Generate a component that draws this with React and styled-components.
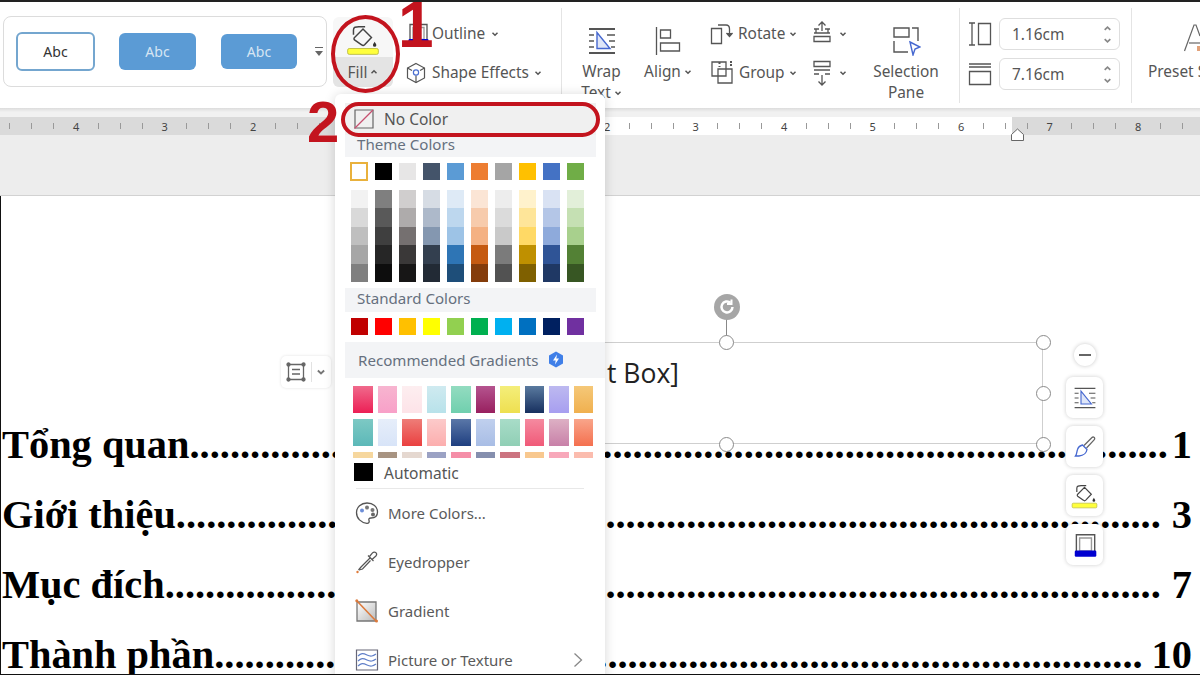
import React from 'react';
import styled, { createGlobalStyle } from 'styled-components';

const GlobalStyle = createGlobalStyle`
  html, body { margin: 0; padding: 0; background: #fff; }
  body { font-family: "Noto Sans", "Open Sans", sans-serif; }
`

const Page = styled.div`
  position: relative;
  width: 1200px;
  height: 675px;
  box-sizing: border-box;
  overflow: hidden;
  display: flex;
  flex-direction: column;
  border-top: 2px solid #222;
  border-bottom: 1px solid #111;
  background: #fff;
  color: #555;
  font-size: 15.4px;
`

/* ribbon */
const Ribbon = styled.div`
  display: flex;
  flex: none;
  height: 106px;
  padding: 12px 0 0 3px;
  box-sizing: border-box;
  background: #fff;
  white-space: nowrap;
`

const Gallery = styled.div`
  flex: none;
  width: 324px;
  height: 71px;
  margin-top: 2px;
  box-sizing: border-box;
  display: flex;
  align-items: center;
  padding-left: 12px;
  border: 1px solid #dcdcdc;
  border-radius: 8px;
`

const StyleChip = styled.div`
  flex: none;
  width: ${p => p.$w}px;
  height: ${p => p.$h}px;
  margin-right: ${p => p.$gap}px;
  box-sizing: border-box;
  display: flex;
  align-items: center;
  justify-content: center;
  border-radius: 6px;
  font-size: 14px;
  color: ${p => (p.$outline ? '#333' : '#d6e5f3')};
  background: ${p => (p.$outline ? '#fff' : '#5b9bd5')};
  border: ${p => (p.$outline ? '2px solid #74a6cf' : 'none')};
`

const GalleryMore = styled.div`
  display: flex;
  margin-left: -9px;
`

const FillButton = styled.div`
  flex: none;
  width: 60px;
  height: 70px;
  margin: 3px 0 0 6px;
  display: flex;
  flex-direction: column;
  border-radius: 6px;
  overflow: hidden;
  background: #f7f7f7;
`

const FillTop = styled.div`
  height: 40px;
  display: flex;
  justify-content: center;
  align-items: flex-end;
`

const FillBottom = styled.div`
  flex: 1;
  display: flex;
  align-items: center;
  justify-content: center;
  gap: 3px;
  background: #e4e4e4;
`

const RowsColumn = styled.div`
  flex: none;
  width: ${p => p.$w}px;
  margin-left: ${p => p.$ml}px;
  display: flex;
  flex-direction: column;
`

const SmallRow = styled.div`
  height: 39px;
  display: flex;
  align-items: center;
  gap: ${p => p.$gap ?? 6}px;
  padding-left: ${p => p.$pl ?? 0}px;
`

const RowLabel = styled.span`
  margin-right: ${p => p.$mr ?? 0}px;
`

const Divider = styled.div`
  flex: none;
  width: 1px;
  height: 95px;
  margin: -6px 0 0 ${p => p.$ml}px;
  background: #e4e4e4;
`

const LargeButton = styled.div`
  flex: none;
  width: ${p => p.$w}px;
  margin-left: ${p => p.$ml ?? 0}px;
  display: flex;
  flex-direction: column;
  align-items: center;
  line-height: 21px;
`

const LargeIcon = styled.div`
  height: 40px;
  padding-top: 7px;
  display: flex;
  align-items: center;
  justify-content: center;
`

const LabelLine = styled.div`
  display: flex;
  align-items: center;
  gap: 3px;
  height: 21px;
`

const DimColumn = styled.div`
  flex: none;
  width: 152px;
  margin-left: 8px;
  padding-top: 4px;
  display: flex;
  flex-direction: column;
  gap: 8px;
`

const DimRow = styled.div`
  display: flex;
  align-items: center;
  justify-content: space-between;
`

const DimInput = styled.div`
  width: 121px;
  height: 32px;
  box-sizing: border-box;
  display: flex;
  align-items: center;
  justify-content: space-between;
  padding: 0 7px 0 12px;
  border: 1px solid #dedede;
  border-radius: 6px;
`

const Stepper = styled.div`
  display: flex;
  flex-direction: column;
  gap: 3px;
`

const PresetColumn = styled.div`
  flex: none;
  margin-left: 16px;
  line-height: 21px;
`

const PresetArt = styled.div`
  height: 47px;
  padding-left: 36px;
  display: flex;
  align-items: center;
`

/* ruler */
const ShadowBand = styled.div`
  flex: none;
  height: 9px;
  background: linear-gradient(#dcdcdc, #f1f1f1 45%, #f1f1f1);
`

const Ruler = styled.div`
  flex: none;
  height: 18px;
  display: flex;
  background: linear-gradient(90deg, #dadada 0 340px, #fff 340px 1012px, #dadada 1012px);
`

const RulerTrack = styled.div`
  display: flex;
  margin-left: -23.5px;
`

const RulerCell = styled.div`
  flex: none;
  width: 88.5px;
  display: grid;
  grid-template-columns: repeat(4, 1fr);
  align-items: center;
  justify-items: center;
  font-size: 11px;
  color: #444;
`

const Tick = styled.span`
  width: 1px;
  height: 6px;
  background: #999;
`

const IndentMarker = styled.div`
  position: absolute;
  left: 1010px;
  top: 125px;
  display: flex;
`

const GreyBand = styled.div`
  flex: none;
  height: 60px;
  background: #ededed;
  border-bottom: 1px solid #d2d2d2;
`

/* document */
const Doc = styled.div`
  flex: 1;
  min-height: 0;
  padding: 214px 8px 0 1px;
  border-left: 1px solid #111;
  font-family: "Liberation Serif", "Times New Roman", serif;
  font-weight: 700;
  font-size: 40.4px;
  line-height: 70px;
  color: #000;
`

const TocRow = styled.div`
  display: flex;
  height: 70px;
  white-space: nowrap;
`

const TocLeft = styled.div`
  flex: none;
  width: 333px;
`

/* the fill menu sits over this stretch of every line */
const TocHidden = styled.div`
  flex: none;
  width: 271px;
`

const TocRight = styled.div`
  flex: 1;
  min-width: 0;
  display: flex;
  justify-content: flex-end;
`

const TocNum = styled.div`
  flex: none;
  padding-left: ${p => p.$gap}px;
`

/* selected text box */
const TextBox = styled.div`
  position: absolute;
  left: 409px;
  top: 340px;
  width: 634px;
  height: 102px;
  box-sizing: border-box;
  border: 1px solid #cfcfcf;
  padding: 10px 0 0 197px;
  font-family: "Open Sans", sans-serif;
  font-size: 26.5px;
  line-height: 40px;
  color: #222;
`

const Handle = styled.span`
  position: absolute;
  left: ${p => p.$x}px;
  top: ${p => p.$y}px;
  width: 15px;
  height: 15px;
  box-sizing: border-box;
  border-radius: 50%;
  border: 1px solid #8a8a8a;
  background: #fff;
`

const RotateStem = styled.span`
  position: absolute;
  left: 316px;
  top: -24px;
  width: 1px;
  height: 17px;
  background: #888;
`

const RotateKnob = styled.span`
  position: absolute;
  left: 304px;
  top: -49px;
  width: 26px;
  height: 26px;
  border-radius: 50%;
  background: #a6a6a6;
  display: flex;
  align-items: center;
  justify-content: center;
`

const LayoutFloat = styled.div`
  position: absolute;
  left: 281px;
  top: 354px;
  width: 50px;
  height: 32px;
  box-sizing: border-box;
  display: flex;
  align-items: center;
  justify-content: space-between;
  padding: 0 5px 0 5px;
  border-radius: 5px;
  background: #fff;
  box-shadow: 0 0 3px rgba(0, 0, 0, 0.12);
`

const FloatSep = styled.span`
  width: 1px;
  height: 20px;
  background: #e2e2e2;
`

const SideBar = styled.div`
  position: absolute;
  left: 1066px;
  top: 342px;
  width: 37px;
  display: flex;
  flex-direction: column;
  align-items: center;
  gap: 8px;
`

const CollapseDot = styled.div`
  width: 22px;
  height: 22px;
  margin-bottom: 3px;
  border-radius: 50%;
  background: #fff;
  box-shadow: 0 0 4px rgba(0, 0, 0, 0.22);
  display: flex;
  align-items: center;
  justify-content: center;
`

const SideButton = styled.div`
  width: 37px;
  height: 41px;
  border-radius: 7px;
  background: #fff;
  box-shadow: 0 0 4px rgba(0, 0, 0, 0.2);
  display: flex;
  align-items: center;
  justify-content: center;
`

/* fill menu */
const Menu = styled.div`
  position: absolute;
  left: 335px;
  top: 92px;
  width: 270px;
  height: 590px;
  box-sizing: border-box;
  padding-top: 9px;
  background: #fff;
  border-radius: 6px 6px 0 0;
  box-shadow: 0 1px 12px rgba(0, 0, 0, 0.16);
`

const NoColorRow = styled.div`
  height: 32px;
  margin: 0 9px 0 10px;
  padding-left: 9px;
  display: flex;
  align-items: center;
  gap: 10px;
  background: #f0f0f0;
  font-size: 15.5px;
`

const SectionHead = styled.div`
  height: ${p => p.$h}px;
  box-sizing: border-box;
  margin: ${p => p.$mt ?? 0}px ${p => p.$mr ?? 9}px 0 10px;
  padding: 0 0 ${p => p.$pb ?? 0}px ${p => p.$pl ?? 12}px;
  display: flex;
  align-items: center;
  gap: ${p => p.$gap ?? 8}px;
  background: #f3f4f6;
  color: #66707e;
  font-size: 15.1px;
`

const SwatchGrid = styled.div`
  display: grid;
  grid-template-columns: repeat(10, 17px);
  column-gap: 7px;
  margin: ${p => p.$mt}px 0 0 16px;
`

const Swatch = styled.div`
  height: ${p => p.$h}px;
  background: ${p => p.$c};
  box-sizing: border-box;
  ${p => p.$picked && 'border: 2px solid #e9b13c; margin: -1px 0 -1px -1px; height: 19px;'}
`

const GradientGrid = styled.div`
  display: grid;
  grid-template-columns: repeat(10, 19.5px);
  column-gap: 5px;
  row-gap: 6px;
  grid-template-rows: 27px 27px 6px;
  margin: 8px 0 0 18px;
  overflow: hidden;
`

const GradientTile = styled.div`
  height: 27px;
  background: linear-gradient(${p => p.$from}, ${p => p.$to});
`

const AutomaticRow = styled.div`
  height: 18px;
  margin: 5px 0 0 19px;
  display: flex;
  align-items: center;
  gap: 11px;
  font-size: 15.5px;
`

const AutoSwatch = styled.span`
  width: 19px;
  height: 18px;
  background: #000;
`

const AutoLabel = styled.span`
  padding-top: 3px;
`

const MenuRule = styled.div`
  height: 1px;
  margin: 7px 21px 0 21px;
  background: #e8e8e8;
`

const ActionRow = styled.div`
  height: 49px;
  box-sizing: border-box;
  padding: 0 22px 0 20px;
  display: flex;
  align-items: center;
  gap: 9px;
  font-size: 15px;
  color: #5a5a5a;
  &:first-of-type { margin-top: 1px; }
`

const ActionIcon = styled.span`
  width: 24px;
  height: 24px;
  flex: none;
`

const Push = styled.span`
  flex: 1;
`

/* red callouts drawn on top of the screenshot */
const MarkOval = styled.div`
  position: absolute;
  left: ${p => p.$x}px;
  top: ${p => p.$y}px;
  width: ${p => p.$w}px;
  height: ${p => p.$h}px;
  box-sizing: border-box;
  border: 4px solid #c3141e;
  border-radius: ${p => p.$r};
`

const MarkNum = styled.div`
  position: absolute;
  left: ${p => p.$x}px;
  top: ${p => p.$y}px;
  font-family: "Liberation Sans", Arial, sans-serif;
  font-weight: 700;
  font-size: ${p => p.$size}px;
  line-height: 1;
  color: #c3141e;
`

const theme = ['#e7e6e6', '#44546a', '#5b9bd5', '#ed7d31', '#a5a5a5', '#ffc000', '#4472c4', '#70ad47']
const themeRow = ['#fff', '#000', ...theme]
const tints = [
  ['#f2f2f2', '#7f7f7f', '#d0cece', '#d6dce4', '#deeaf6', '#fbe5d5', '#ededed', '#fff2cc', '#d9e2f3', '#e2efd9'],
  ['#d9d9d9', '#595959', '#aeabab', '#adb9ca', '#bdd7ee', '#f7cbac', '#dbdbdb', '#fee599', '#b4c6e7', '#c5e0b3'],
  ['#bfbfbf', '#3f3f3f', '#757070', '#8497b0', '#9dc3e6', '#f4b183', '#c9c9c9', '#ffd965', '#8eaadb', '#a8d08d'],
  ['#a6a6a6', '#262626', '#3a3838', '#333f4f', '#2e75b5', '#c55a11', '#7b7b7b', '#bf9000', '#2f5496', '#538135'],
  ['#7f7f7f', '#0d0d0d', '#171616', '#222a35', '#1e4e79', '#843c0b', '#525252', '#7f6000', '#1f3864', '#375623'],
]
const standard = ['#c00000', '#ff0000', '#ffc000', '#ffff00', '#92d050', '#00b050', '#00b0f0', '#0070c0', '#002060', '#7030a0']
const gradients = [
  ['#f06a8c', '#ec1f55'], ['#f7b5d0', '#f8a0c8'], ['#fdeef0', '#fde3e8'], ['#cfeaf0', '#b8e2ea'], ['#93dcc0', '#70cfae'],
  ['#b5548f', '#98205f'], ['#f4ee7a', '#eedf50'], ['#5a7a9f', '#17305f'], ['#bdb9f0', '#a79ef0'], ['#f5c878', '#f0b04f'],
  ['#7dc9c4', '#5cb8b8'], ['#e6eefa', '#d8e4f8'], ['#ee7d78', '#ea4040'], ['#fccaca', '#fcaeae'], ['#5a77a8', '#1f3f80'],
  ['#c0d0ee', '#a8bde5'], ['#a8dcc8', '#90cfb5'], ['#f58aa0', '#f05a78'], ['#ddb0c4', '#c880a8'], ['#f9a58a', '#f4704f'],
  ['#f6d79e', '#f6d79e'], ['#a89482', '#a89482'], ['#e5d8d0', '#e5d8d0'], ['#9ba2c4', '#9ba2c4'], ['#f58ea8', '#f58ea8'],
  ['#858fae', '#858fae'], ['#cc7480', '#cc7480'], ['#f8c88f', '#f8c88f'], ['#f8a8ba', '#f8a8ba'], ['#fbbcae', '#fbbcae'],
]
// the numbers under the menu and off the page edges are left out
const rulerNums = ['', 4, 3, 2, '', '', '', 2, 3, 4, 5, 6, 7, 8, '']
const tocRows = [
  { label: 'Tổng quan', num: '1', gap: 4, lead: 15, trail: 56 },
  { label: 'Giới thiệu', num: '3', gap: 11, lead: 16, trail: 56 },
  { label: 'Mục đích', num: '7', gap: 11, lead: 17, trail: 56 },
  { label: 'Thành phần', num: '10', gap: 9, lead: 13, trail: 54 },
]

const Caret = ({ up, color = '#555', size = 8 }) => (
  <svg width={size} height={size} viewBox="0 0 8 8" fill="none" stroke={color} strokeWidth="1.5">
    <path d={up ? 'M1.5 5.2 4 2.8l2.5 2.4' : 'M1.5 2.8 4 5.2l2.5-2.4'} />
  </svg>
)

const BucketIcon = ({ size = 34, bar = true }) => (
  <svg width={size} height={size} viewBox="0 0 34 34" fill="none" stroke="#444" strokeWidth="1.4">
    <path d="M9 15.5 17 7.5l8 8-6.5 7a2 2 0 0 1-2.8 0L9 17.8a1.6 1.6 0 0 1 0-2.3Z" />
    <path d="M8 13V8.5c0-3 2-3 5-3h6" />
    <path d="M28 19.5c-1 1.6-1.6 2.4-1.6 3.3a1.6 1.6 0 0 0 3.2 0c0-.9-.6-1.7-1.6-3.3Z" fill="#333" stroke="none" />
    {bar && <rect x="2.5" y="26" width="29" height="5.5" rx="1.5" fill="#ffff3c" stroke="#b7b73a" strokeWidth="0.8" />}
  </svg>
)

const OutlineIcon = ({ size = 26 }) => (
  <svg width={size} height={size} viewBox="0 0 26 26" fill="none" stroke="#555" strokeWidth="1.3">
    <path d="M5 3.5h17v17H5z" />
    <path d="M8 6.5h11v12H8z" stroke="#999" />
    <rect x="3.5" y="18" width="20" height="6" rx="1.2" fill="#0000d0" stroke="none" />
  </svg>
)

const EffectsIcon = () => (
  <svg width="22" height="22" viewBox="0 0 22 22" fill="none" stroke="#555" strokeWidth="1.2">
    <path d="M11 1.5 19.5 6v10L11 20.5 2.500 16V6Z" />
    <path d="M2.500 6 7 8.500M19.500 6 15 8.500M11 13.500v7" />
    <circle cx="11" cy="10.500" r="2.600" stroke="#4a6ed0" />
  </svg>
)

const WrapIcon = ({ size = 30 }) => (
  <svg width={size} height={size} viewBox="0 0 30 30" fill="none" stroke="#555" strokeWidth="1.3">
    <path d="M2 3h26M2 27h26" strokeWidth="1.8" />
    <path d="M2 9h5M2 15h5M2 21h5M20 9h8M22 15h6M24 21h4" />
    <path d="M10 6.500v16h13Z" stroke="#4668d0" strokeWidth="1.400" fill="#dfe6f8" />
  </svg>
)

const AlignIcon = () => (
  <svg width="28" height="30" viewBox="0 0 28 30" fill="none" stroke="#555" strokeWidth="1.3">
    <path d="M2.500 1v28" />
    <path d="M6.500 4h10v8h-10zM6.500 17h19v8h-19z" />
  </svg>
)

const RotateIcon = () => (
  <svg width="24" height="24" viewBox="0 0 24 24" fill="none" stroke="#555" strokeWidth="1.3">
    <path d="M1.500 6.500h10v15h-10z" />
    <path d="M8 3h8c3 0 3.500 2 3.500 4v6" />
    <path d="m16.500 11 3 3.500 3-3.500" fill="#555" />
  </svg>
)

const GroupIcon = () => (
  <svg width="25" height="25" viewBox="0 0 25 25" fill="none" stroke="#555" strokeWidth="1.3">
    <path d="M2 2h14v14H2z" />
    <path d="M8 9h14v14H8z" />
    <path d="M9.500 2v5M20 2h3M20 5h3" strokeWidth="2" strokeDasharray="2 2" />
  </svg>
)

const LayerUpIcon = () => (
  <svg width="20" height="26" viewBox="0 0 20 26" fill="none" stroke="#555" strokeWidth="1.3">
    <path d="M10 1v9M6.500 4.500 10 1l3.500 3.500" />
    <path d="M2 8h5M13 8h5M2 12h16M2 15.500h16v5H2z" />
    <path d="M4 8v4M16 8v4" />
  </svg>
)

const LayerDownIcon = () => (
  <svg width="20" height="26" viewBox="0 0 20 26" fill="none" stroke="#555" strokeWidth="1.3">
    <path d="M10 15v10M6.500 21.500 10 25l3.500-3.500" />
    <path d="M2 1.500h16v5H2zM2 10h16M2 14h5M13 14h5" />
  </svg>
)

const PaneIcon = () => (
  <svg width="30" height="30" viewBox="0 0 30 30" fill="none" stroke="#555" strokeWidth="1.4">
    <path d="M3 2h15v9H3zM21 2h6v13M3 15v11h14" />
    <path d="m19 16 10 5-5 2-2 6Z" stroke="#4668d0" fill="#fff" />
  </svg>
)

const WidthIcon = () => (
  <svg width="24" height="24" viewBox="0 0 24 24" fill="none" stroke="#555" strokeWidth="1.3">
    <path d="M1 1h6M1 23h6M4 1v22" />
    <path d="M10.500 1.500h12v21h-12z" />
  </svg>
)

const HeightIcon = () => (
  <svg width="24" height="24" viewBox="0 0 24 24" fill="none" stroke="#555" strokeWidth="1.3">
    <path d="M1 2h22M1 5h22" />
    <path d="M1.500 9.500h21v13h-21z" />
  </svg>
)

const PresetIcon = () => (
  <svg width="16" height="28" viewBox="0 0 16 28" fill="none" stroke="#666" strokeWidth="1.200">
    <path d="M0.500 27 10 1h2l4 11" />
    <path d="M5 19h11" />
    <path d="M13 22h3v5h-3z" fill="#e2a27a" stroke="none" />
  </svg>
)

const NoColorIcon = () => (
  <svg width="20" height="20" viewBox="0 0 20 20" fill="none">
    <path d="M1 1h18v18H1z" stroke="#666" strokeWidth="1.2" />
    <path d="M0.500 19.500 19 1" stroke="#c75070" strokeWidth="1.200" />
  </svg>
)

const PaletteIcon = () => (
  <svg width="24" height="24" viewBox="0 0 24 24" fill="none" stroke="#555" strokeWidth="1.3">
    <path d="M12 2c6 0 10.500 3.500 10.500 9s-4 6-6.500 6c-1.800 0-2.500 1-2 2.500.6 1.700-.3 3-2.200 2.800C6 21.500 1.500 17.500 1.500 11.500 1.500 6 6 2 12 2Z" />
    <circle cx="7" cy="9.500" r="2" fill="#6d8ed8" stroke="none" />
    <circle cx="12" cy="6.500" r="2" fill="#777" stroke="none" />
    <circle cx="17.500" cy="9" r="2" fill="#777" stroke="none" />
    <circle cx="18" cy="13.500" r="2" fill="#666" stroke="none" />
  </svg>
)

const DropperIcon = () => (
  <svg width="24" height="24" viewBox="0 0 24 24" fill="none" stroke="#555" strokeWidth="1.2">
    <path d="M14.500 6.500 17.500 2.800c1-1 2.500-1 3.400-.1s.9 2.300 0 3.300L17 9.500" />
    <path d="m13 5.500 5.500 5.500M15 8 6 17l-2.500 3" />
    <path d="m15.500 10.500-8 8.500L4 20" />
    <circle cx="2.500" cy="22" r="1.200" fill="#e07b39" stroke="none" />
  </svg>
)

const GradientIcon = () => (
  <svg width="24" height="24" viewBox="0 0 24 24" fill="none">
    <defs>
      <linearGradient id="gradSq" x1="0" y1="0" x2="1" y2="1">
        <stop offset="0" stopColor="#fff" />
        <stop offset="1" stopColor="#bbb" />
      </linearGradient>
    </defs>
    <path d="M2 3h19v19H2z" fill="url(#gradSq)" stroke="#777" strokeWidth="1.300" />
    <path d="M1.500 1.500 21.500 22.500" stroke="#dc7a3c" strokeWidth="1.600" />
    <circle cx="1.800" cy="1.800" r="1.500" fill="#dc7a3c" />
    <circle cx="21.500" cy="22" r="1.500" fill="#dc7a3c" />
  </svg>
)

const TextureIcon = () => (
  <svg width="24" height="24" viewBox="0 0 24 24" fill="none" stroke="#5f7ec8" strokeWidth="1.200">
    <path d="M1.500 2h21v20h-21z" stroke="#667" />
    <path d="M3 8c3-3 5-3 9-1s6 1 9-1M3 13c3-3 5-3 9-1s6 1 9-1M3 18c3-3 5-3 9-1s6 1 9-1" />
  </svg>
)

const BoltBadge = () => (
  <svg width="16" height="17" viewBox="0 0 16 17">
    <path d="M8 .5 15 4.500v8L8 16.500 1 12.500v-8Z" fill="#3f7fe8" />
    <path d="M9 3.500 5 9.500h2.700L7 13.500l4-6H8.300Z" fill="#fff" />
  </svg>
)

const FrameIcon = () => (
  <svg width="20" height="20" viewBox="0 0 20 20" fill="none" stroke="#666" strokeWidth="1.300">
    <path d="M2.500 2.500h15v15h-15zM6 7.500h8M6 12h8" />
    <circle cx="2.500" cy="2.500" r="1.500" fill="#666" />
    <circle cx="17.500" cy="2.500" r="1.500" fill="#666" />
    <circle cx="2.500" cy="17.500" r="1.500" fill="#666" />
    <circle cx="17.500" cy="17.500" r="1.500" fill="#666" />
  </svg>
)

const BrushIcon = () => (
  <svg width="24" height="24" viewBox="0 0 24 24" fill="none" stroke="#4668d0" strokeWidth="1.300">
    <path d="M11 10.500 19 2.500c1-1 2.700-.3 2.700 1 0 .6-.2 1-.6 1.400L13.500 13" stroke="#666" />
    <path d="m9.500 10 4.500 4.500c-.5 3-3 6-8 6.500H2.500c1.500-2 1-3.500 2-6.500.6-2 2.500-3.800 5-4.500Z" />
  </svg>
)

const RotateGlyph = () => (
  <svg width="18" height="18" viewBox="0 0 18 18" fill="none" stroke="#fff" strokeWidth="2.500">
    <path d="M14.500 9a5.500 5.500 0 1 1-2-4.300" />
    <path d="M13.500 1.500v4.500H9" strokeWidth="2" />
  </svg>
)

const App = () => (
  <Page>
    <GlobalStyle />
    <Ribbon>
      <Gallery>
        <StyleChip $outline $w={79} $h={39} $gap={24}>Abc</StyleChip>
        <StyleChip $w={77} $h={37} $gap={25}>Abc</StyleChip>
        <StyleChip $w={76} $h={35} $gap={26}>Abc</StyleChip>
        <GalleryMore>
          <svg width="10" height="12" viewBox="0 0 10 12" fill="#666"><path d="M1 1h8v1H1zM1 5h8L5 10Z" /></svg>
        </GalleryMore>
      </Gallery>
      <FillButton>
        <FillTop><BucketIcon size={36} /></FillTop>
        <FillBottom>Fill <Caret up /></FillBottom>
      </FillButton>
      <RowsColumn $w={150} $ml={5}>
        <SmallRow $gap={1} $pl={7}><OutlineIcon /> <RowLabel $mr={5}>Outline</RowLabel> <Caret /></SmallRow>
        <SmallRow $gap={5} $pl={7}><EffectsIcon /> Shape Effects <Caret /></SmallRow>
      </RowsColumn>
      <Divider $ml={13} />
      <LargeButton $w={79}>
        <LargeIcon><WrapIcon /></LargeIcon>
        <LabelLine>Wrap</LabelLine>
        <LabelLine>Text <Caret /></LabelLine>
      </LargeButton>
      <LargeButton $w={54}>
        <LargeIcon><AlignIcon /></LargeIcon>
        <LabelLine>Align <Caret /></LabelLine>
      </LargeButton>
      <RowsColumn $w={95} $ml={13}>
        <SmallRow $gap={4} $pl={2}><RotateIcon /> Rotate <Caret /></SmallRow>
        <SmallRow $gap={4} $pl={2}><GroupIcon /> Group <Caret /></SmallRow>
      </RowsColumn>
      <RowsColumn $w={46} $ml={9}>
        <SmallRow $gap={7}><LayerUpIcon /> <Caret /></SmallRow>
        <SmallRow $gap={7}><LayerDownIcon /> <Caret /></SmallRow>
      </RowsColumn>
      <LargeButton $w={96}>
        <LargeIcon><PaneIcon /></LargeIcon>
        <LabelLine>Selection</LabelLine>
        <LabelLine>Pane</LabelLine>
      </LargeButton>
      <Divider $ml={5} />
      <DimColumn>
        <DimRow>
          <WidthIcon />
          <DimInput>1.16cm <Stepper><Caret up size={9} color="#888" /><Caret size={9} color="#888" /></Stepper></DimInput>
        </DimRow>
        <DimRow>
          <HeightIcon />
          <DimInput>7.16cm <Stepper><Caret up size={9} color="#888" /><Caret size={9} color="#888" /></Stepper></DimInput>
        </DimRow>
      </DimColumn>
      <Divider $ml={11} />
      <PresetColumn>
        <PresetArt><PresetIcon /></PresetArt>
        <div>Preset S</div>
      </PresetColumn>
    </Ribbon>
    <ShadowBand />
    <Ruler>
      <RulerTrack>
        {rulerNums.map((n, i) => (
          <RulerCell key={i}>
            <span>{n}</span><Tick /><Tick /><Tick />
          </RulerCell>
        ))}
      </RulerTrack>
    </Ruler>
    <IndentMarker>
      <svg width="15" height="15" viewBox="0 0 15 15" fill="#fff" stroke="#666" strokeWidth="1"><path d="M1.500 13.500v-6L7.500 2l6 5.500v6Z" /></svg>
    </IndentMarker>
    <GreyBand />
    <Doc>
      {tocRows.map(r => (
        <TocRow key={r.label}>
          <TocLeft>{r.label}{'.'.repeat(r.lead)}</TocLeft>
          <TocHidden />
          <TocRight>{'.'.repeat(r.trail)}</TocRight>
          <TocNum $gap={r.gap}>{r.num}</TocNum>
        </TocRow>
      ))}
    </Doc>

    <TextBox>
      t Box]
      <RotateStem />
      <RotateKnob><RotateGlyph /></RotateKnob>
      <Handle $x={309} $y={-8} />
      <Handle $x={626} $y={-8} />
      <Handle $x={626} $y={43} />
      <Handle $x={309} $y={94} />
      <Handle $x={626} $y={94} />
    </TextBox>
    <LayoutFloat>
      <FrameIcon />
      <FloatSep />
      <Caret color="#777" size={10} />
    </LayoutFloat>
    <SideBar>
      <CollapseDot>
        <svg width="12" height="2" viewBox="0 0 12 2"><path d="M0 0h12v2H0z" fill="#666" /></svg>
      </CollapseDot>
      <SideButton><WrapIcon size={24} /></SideButton>
      <SideButton><BrushIcon /></SideButton>
      <SideButton><BucketIcon size={29} /></SideButton>
      <SideButton><OutlineIcon size={28} /></SideButton>
    </SideBar>

    <Menu>
      <NoColorRow><NoColorIcon /> No Color</NoColorRow>
      <SectionHead $h={22} $pb={4}>Theme Colors</SectionHead>
      <SwatchGrid $mt={6}>
        {themeRow.map((c, i) => <Swatch key={c} $c={c} $h={17} $picked={i === 0} />)}
      </SwatchGrid>
      <SwatchGrid $mt={10}>
        {tints.flat().map((c, i) => <Swatch key={i} $c={c} $h={18.4} />)}
      </SwatchGrid>
      <SectionHead $h={24} $mt={6} $pb={4}>Standard Colors</SectionHead>
      <SwatchGrid $mt={6}>
        {standard.map(c => <Swatch key={c} $c={c} $h={17} />)}
      </SwatchGrid>
      <SectionHead $h={36} $mt={7} $mr={0} $pl={13} $gap={10}>Recommended Gradients <BoltBadge /></SectionHead>
      <GradientGrid>
        {gradients.map((g, i) => <GradientTile key={i} $from={g[0]} $to={g[1]} />)}
      </GradientGrid>
      <AutomaticRow><AutoSwatch /> <AutoLabel>Automatic</AutoLabel></AutomaticRow>
      <MenuRule />
      <ActionRow><ActionIcon><PaletteIcon /></ActionIcon> More Colors...</ActionRow>
      <ActionRow><ActionIcon><DropperIcon /></ActionIcon> Eyedropper</ActionRow>
      <ActionRow><ActionIcon><GradientIcon /></ActionIcon> Gradient</ActionRow>
      <ActionRow>
        <ActionIcon><TextureIcon /></ActionIcon> Picture or Texture
        <Push />
        <svg width="10" height="16" viewBox="0 0 10 16" fill="none" stroke="#888" strokeWidth="1.300"><path d="m1.500 1.500 7 6.500-7 6.500" /></svg>
      </ActionRow>
    </Menu>

    <MarkOval $x={331} $y={13} $w={69} $h={78} $r="50%" />
    <MarkOval $x={341} $y={100} $w={259} $h={35} $r="18px" />
    <MarkNum $x={398} $y={-9} $size={64}>1</MarkNum>
    <MarkNum $x={307} $y={91} $size={58}>2</MarkNum>
  </Page>
)

export default App
